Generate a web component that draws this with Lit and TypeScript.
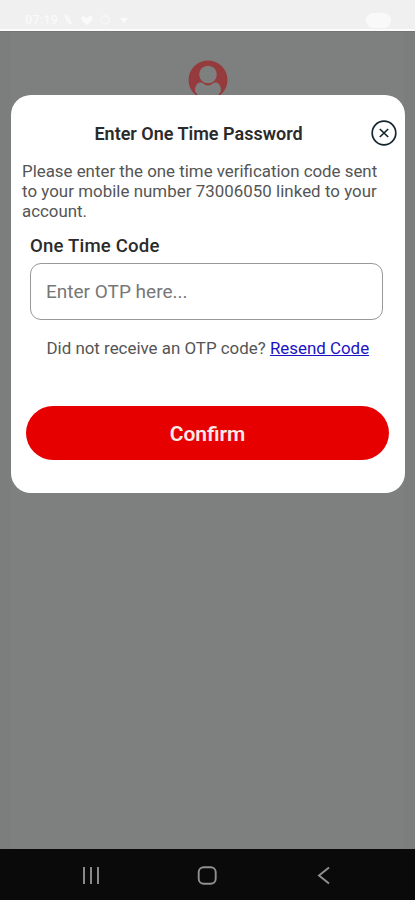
import { LitElement, html, css, svg } from "lit";
import { customElement } from "lit/decorators.js";

@customElement("status-bar")
class StatusBar extends LitElement {
  static styles = css`
    :host { display: flex; box-sizing: border-box; height: 31px; background: #f0f0f0; border-bottom: 2px solid #fbfbfb;
      padding: 12px 24px 0 25px; justify-content: space-between; color: #f9f9f9; font: 500 13px/16px Roboto, sans-serif; }
    .left, .right { display: flex; gap: 5px; align-items: center; height: 16px; }
    .pill { width: 25px; height: 15px; border-radius: 8px; background: #f9f9f9; }
    svg { display: block; }
  `;
  render() {
    return html`
      <div class="left"><span>07:19</span>
        <svg width="66" height="14" viewBox="0 0 66 14" fill="#fafafa">
          <path d="M1 2h3l5 9H6zM8 2 2 11" stroke="#f6f6f6"/>
          <path d="M24 12c-8-5-6-9-3-9l3 2 3-2c4 0 4 4-3 9z"/>
          <circle cx="42" cy="7" r="4" fill="none" stroke="#f5f5f5" stroke-width="2"/>
          <path d="M57 5h8l-4 5z"/>
        </svg></div>
      <div class="right"><div class="pill"></div></div>`;
  }
}

@customElement("nav-bar")
class NavBar extends LitElement {
  static styles = css`
    :host { display: block; height: 51px; background: #0a0a0a; }
    svg { display: block; }
  `;
  render() {
    return html`<svg width="415" height="51" fill="none" stroke="#919191" stroke-width="1.9">
      ${[84, 91, 98].map((x) => svg`<path d="M${x} 18v17"/>`)}
      <rect x="198.7" y="18.2" width="17" height="16.6" rx="5"/>
      <path d="m329 18.5-10 8 10 8"/>
    </svg>`;
  }
}

@customElement("otp-dialog")
class OtpDialog extends LitElement {
  static styles = css`
    :host { display: block; box-sizing: border-box; width: 394px; height: 398px; margin-left: 11px;
      background: #fff; border-radius: 20px; padding: 24px 8px 0 11px; color: #555; }
    header { display: grid; grid-template-columns: 1fr 26px; align-items: center; height: 27px; }
    h1 { margin: 0 0 0 4px; padding-top: 2px; text-align: center; font-size: 18px; line-height: 24px; font-weight: 600; color: #2b2b2b; white-space: nowrap; }
    svg { display: block; }
    .info { margin: 15px 0 0; font-size: 16.87px; line-height: 20px; white-space: nowrap; }
    .line { display: block; }
    .number { letter-spacing: 0.045px; }
    label { display: block; margin: 14px 0 0 8px; font-size: 18.6px; line-height: 22px; letter-spacing: 0.18px; font-weight: 500; color: #2b2b2b; }
    .field { box-sizing: border-box; margin: 6px 0 0 8px; width: 353px; height: 57px; border: 1px solid #999; border-radius: 11px;
      padding: 0 15px; font-size: 19px; line-height: 55px; color: #777; }
    .resend { margin: 17px 0 0 24.5px; font-size: 16.9px; line-height: 22px; white-space: nowrap; }
    a { color: #1b12c4; text-decoration: underline; }
    button { display: block; margin: 47px 0 0 4px; width: 363px; height: 54px; border: 0; border-radius: 27px; background: #e60000;
      color: #fbe9e9; font: 600 21px/52px Roboto, sans-serif; padding: 2px 0 0; }
  `;
  render() {
    return html`
      <header><h1>Enter One Time Password</h1>
        <svg width="26" height="26" fill="none" stroke="#15262f" stroke-width="1.7"><circle cx="13" cy="13" r="11.8"/><path d="m8.8 9 8.4 8M17.2 9l-8.4 8"/></svg>
      </header>
      <p class="info"><span class="line">Please enter the one time verification code sent</span>
        <span class="line number">to your mobile number 73006050 linked to your</span>
        <span class="line">account.</span></p>
      <label>One Time Code</label>
      <div class="field">Enter OTP here...</div>
      <div class="resend">Did not receive an OTP code? <a>Resend Code</a></div>
      <button>Confirm</button>`;
  }
}

@customElement("app-root")
class AppRoot extends LitElement {
  static styles = css`
    :host { display: flex; flex-direction: column; width: 415px; height: 900px; overflow: hidden; background: #7e807f; font-family: Roboto, sans-serif; }
    .page { flex: 1; box-sizing: border-box; border-top: 1px solid #747675; padding-top: 28px; min-height: 0;
      background: linear-gradient(90deg, #7c7e7d 11px, #7e807f 11px, #7e807f 404px, #7c7e7d 404px); }
    .avatar { display: block; height: 35px; margin-left: 188px; overflow: hidden; }
  `;
  render() {
    return html`
      <status-bar></status-bar>
      <div class="page">
        <svg class="avatar" width="40" height="35" viewBox="0 0 40 35">
          <circle cx="20" cy="20" r="19.5" fill="#963b3d"/>
          <circle cx="20" cy="14.5" r="8.8" fill="#7e807f"/>
          <path d="M7 31c0-9 6-10 9-7q4 3 8 0c3-3 9-2 9 7l-4 6H11z" fill="#7e807f"/>
        </svg>
        <otp-dialog></otp-dialog>
      </div>
      <nav-bar></nav-bar>`;
  }
}
